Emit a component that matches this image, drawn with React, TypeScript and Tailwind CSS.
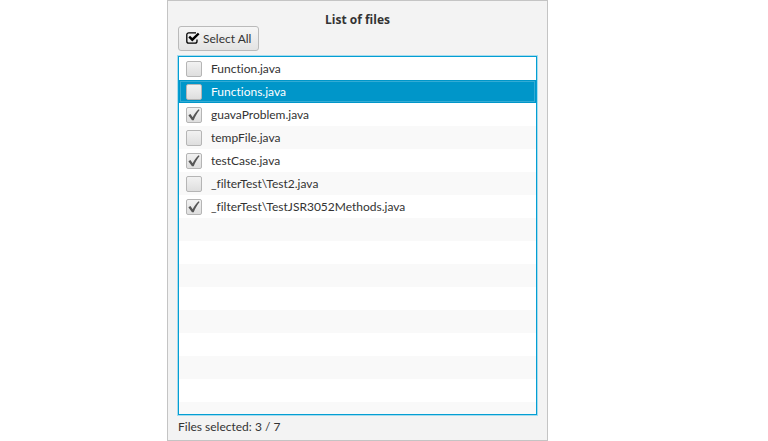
import { useState } from "react";

const initialFiles = [
  { name: "Function.java", selected: false },
  { name: "Functions.java", selected: false },
  { name: "guavaProblem.java", selected: true },
  { name: "tempFile.java", selected: false },
  { name: "testCase.java", selected: true },
  { name: "_filterTest\\Test2.java", selected: false },
  { name: "_filterTest\\TestJSR3052Methods.java", selected: true },
];

const emptyRows = Array.from({ length: 9 }, (_, i) => i);

function SelectAllIcon() {
  return (
    <svg className="mb-0.5 h-3 w-3.5 shrink-0" viewBox="0 0 14 12" fill="none" aria-hidden="true">
      <path
        d="M10 .8H2.800a2 2 0 0 0-2 2v6.400a2 2 0 0 0 2 2H9a2 2 0 0 0 2-2V7.500"
        stroke="#000"
        strokeWidth="1.300"
      />
      <path d="M3.200 4.600 6.300 7.700 12.700 1.500" stroke="#000" strokeWidth="2.400" />
    </svg>
  );
}

function CheckMark() {
  return (
    <svg
      className="pointer-events-none col-start-1 row-start-1 h-3 w-3 place-self-center"
      viewBox="0 0 12 12"
      aria-hidden="true"
    >
      <path d="M.4 6.200 2.400 5.100 4.700 8.200C6.200 5.200 8.200 2.500 10.600 .3L11.600 1.100C9.200 4 7.400 7.200 5.700 11.200H4Z" fill="#555" />
    </svg>
  );
}

export default function App() {
  const [files, setFiles] = useState(initialFiles);
  const [current, setCurrent] = useState(1);
  const count = files.filter((f) => f.selected).length;

  const toggle = (index: number) => {
    setCurrent(index);
    setFiles(files.map((f, i) => (i === index ? { ...f, selected: !f.selected } : f)));
  };

  return (
    <div className="min-h-screen bg-white pr-[220px] pl-[167px] font-['Lato','Open_Sans',sans-serif] text-xs text-[#333] [font-variant-ligatures:none]">
      <main className="flex h-screen flex-col border border-[#c4c4c4] bg-[#f3f3f3] px-2.5 pt-3 pb-[5px]">
        <h1 className="text-center font-['Open_Sans','Noto_Sans',sans-serif] leading-[13px] font-bold">List of files</h1>
        <button
          type="button"
          onClick={() => setFiles(files.map((f) => ({ ...f, selected: true })))}
          className="flex h-[25px] shrink-0 items-center gap-[3px] self-start rounded-[3px] border border-[#bababa] bg-linear-to-b from-[#f6f6f6] to-[#e3e3e3] px-[7px]"
        >
          <SelectAllIcon />
          Select All
        </button>
        <ul className="mt-[5px] min-h-0 flex-1 overflow-hidden border border-[#039ed3] bg-white shadow-[0_0_0_1px_#a6dcee]">
          {files.map((file, index) => (
            <li
              key={file.name}
              className={
                index === current
                  ? "h-[23px] bg-[#0096c9] text-white outline outline-offset-[-2px] outline-[#33abd4]"
                  : "h-[23px] odd:bg-white even:bg-[#f9f9f9]"
              }
            >
              <label className="flex h-full items-center gap-[9px] pl-[7px]">
                <span className="grid h-4 w-4 shrink-0">
                  <input
                    type="checkbox"
                    checked={file.selected}
                    onChange={() => toggle(index)}
                    className="col-start-1 row-start-1 h-4 w-4 appearance-none rounded-xs border border-[#b5b5b5] bg-linear-to-b from-[#f2f2f2] to-[#dedede]"
                  />
                  {file.selected && <CheckMark />}
                </span>
                {file.name}
              </label>
            </li>
          ))}
          {emptyRows.map((row) => (
            <li key={row} aria-hidden="true" className="h-[23px] odd:bg-white even:bg-[#f9f9f9]" />
          ))}
        </ul>
        <p className="mt-1 leading-4">Files selected: {count} / {files.length}</p>
      </main>
    </div>
  );
}
